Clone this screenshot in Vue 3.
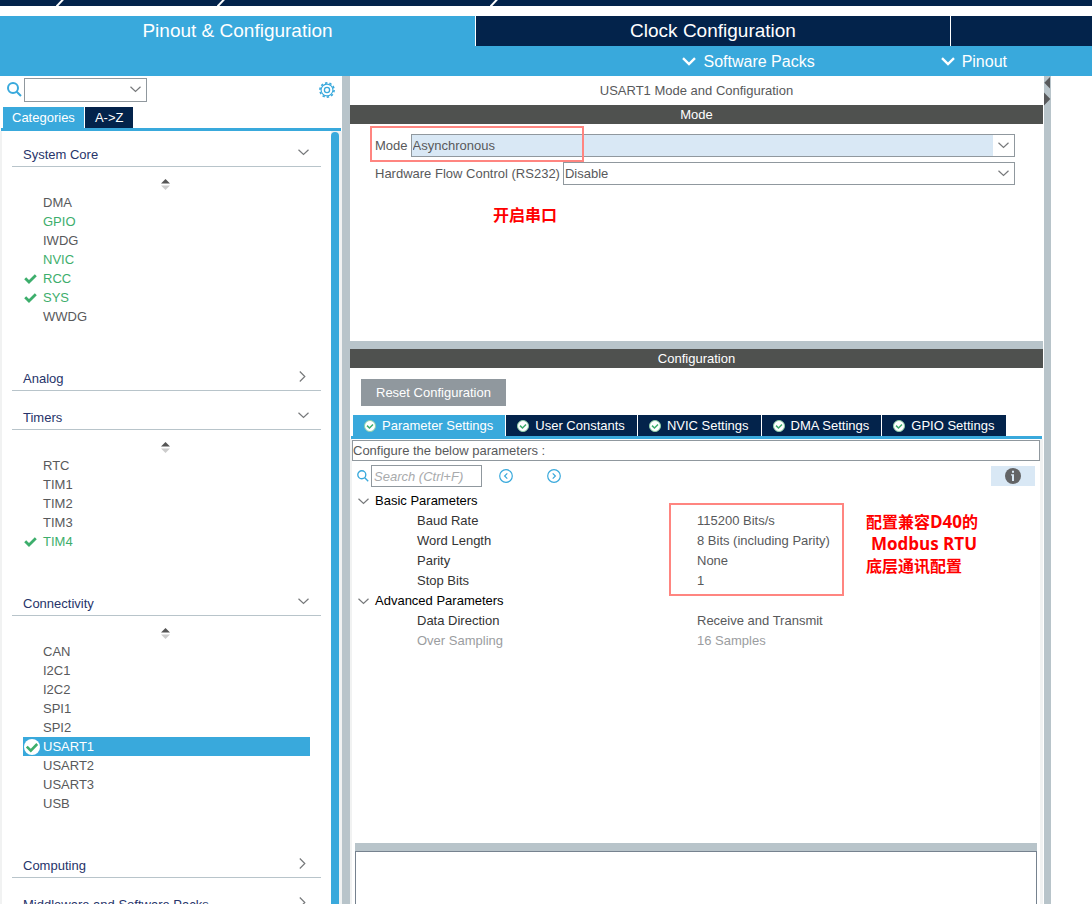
<script setup>
import { ref } from 'vue'

const sections = [
  {
    title: 'System Core',
    items: [
      { name: 'DMA' },
      { name: 'GPIO', on: true },
      { name: 'IWDG' },
      { name: 'NVIC', on: true },
      { name: 'RCC', on: true, check: true },
      { name: 'SYS', on: true, check: true },
      { name: 'WWDG' },
    ],
  },
  { title: 'Analog', items: null },
  {
    title: 'Timers',
    items: [
      { name: 'RTC' },
      { name: 'TIM1' },
      { name: 'TIM2' },
      { name: 'TIM3' },
      { name: 'TIM4', on: true, check: true },
    ],
  },
  {
    title: 'Connectivity',
    items: [
      { name: 'CAN' },
      { name: 'I2C1' },
      { name: 'I2C2' },
      { name: 'SPI1' },
      { name: 'SPI2' },
      { name: 'USART1' },
      { name: 'USART2' },
      { name: 'USART3' },
      { name: 'USB' },
    ],
  },
  { title: 'Computing', items: null },
  { title: 'Middleware and Software Packs', items: null },
]
const selected = ref('USART1')

const configTabs = ['Parameter Settings', 'User Constants', 'NVIC Settings', 'DMA Settings', 'GPIO Settings']
const activeTab = ref('Parameter Settings')

const groups = [
  {
    name: 'Basic Parameters',
    rows: [
      { name: 'Baud Rate', value: '115200 Bits/s' },
      { name: 'Word Length', value: '8 Bits (including Parity)' },
      { name: 'Parity', value: 'None' },
      { name: 'Stop Bits', value: '1' },
    ],
  },
  {
    name: 'Advanced Parameters',
    rows: [
      { name: 'Data Direction', value: 'Receive and Transmit' },
      { name: 'Over Sampling', value: '16 Samples', disabled: true },
    ],
  },
]
const mode = ref('Asynchronous')
const flow = ref('Disable')
</script>

<template>
  <div class="app">
    <div class="crumbs">
      <svg class="slash first" width="8" height="6" viewBox="0 0 8 6"><path d="M0.5 6.5L7 -0.5" /></svg>
      <svg class="slash second" width="8" height="6" viewBox="0 0 8 6"><path d="M0.5 6.5L7 -0.5" /></svg>
      <svg class="slash third" width="8" height="6" viewBox="0 0 8 6"><path d="M0.5 6.5L7 -0.5" /></svg>
    </div>

    <nav class="main-tabs">
      <button class="main-tab active">Pinout &amp; Configuration</button>
      <button class="main-tab">Clock Configuration</button>
      <button class="main-tab rest" aria-label="Project Manager"></button>
    </nav>
    <div class="sub-menu">
      <button class="menu-btn">
        <svg width="14" height="9" viewBox="0 0 14 9"><path d="M1 1.2L7 7L13 1.2" /></svg>
        Software Packs
      </button>
      <button class="menu-btn">
        <svg width="14" height="9" viewBox="0 0 14 9"><path d="M1 1.2L7 7L13 1.2" /></svg>
        Pinout
      </button>
    </div>

    <div class="workspace">
      <aside class="sidebar">
        <div class="finder">
          <svg class="lens" width="15" height="15" viewBox="0 0 15 15"><circle cx="6" cy="6" r="5" /><path d="M9.7 9.7L14 14" /></svg>
          <label class="combo finder-combo">
            <select aria-label="Search peripheral"><option></option></select>
            <svg class="chev" width="11" height="7" viewBox="0 0 11 7"><path d="M0.5 0.8L5.5 5.5L10.5 0.8" /></svg>
          </label>
          <button class="gear" aria-label="Settings">
            <svg width="16" height="16" viewBox="0 0 16 16">
              <circle cx="8" cy="8" r="7.1" stroke-width="1.6" stroke-dasharray="2.4 2.06" />
              <circle cx="8" cy="8" r="5.9" stroke-width="1.1" />
              <circle cx="8" cy="8" r="2.6" stroke-width="1.3" />
            </svg>
          </button>
        </div>
        <div class="side-tabs">
          <button class="side-tab active">Categories</button>
          <button class="side-tab">A-&gt;Z</button>
        </div>
        <div class="tree-wrap">
          <div class="tree">
            <section v-for="s in sections" :key="s.title">
              <button class="cat">
                <span>{{ s.title }}</span>
                <svg v-if="s.items" class="chev" width="11" height="7" viewBox="0 0 11 7"><path d="M0.5 0.8L5.5 5.5L10.5 0.8" /></svg>
                <svg v-else class="chev side" width="7" height="11" viewBox="0 0 7 11"><path d="M0.8 0.5L5.8 5.5L0.8 10.5" /></svg>
              </button>
              <div v-if="s.items" class="cat-body">
                <div class="sorter">
                  <svg width="9" height="11" viewBox="0 0 9 11">
                    <path d="M4.5 0L9 4.5H0Z" fill="#555" />
                    <path d="M0 6.5H9L4.5 11Z" fill="#ccc" />
                  </svg>
                </div>
                <button
                  v-for="i in s.items"
                  :key="i.name"
                  class="item"
                  :class="{ on: i.on, selected: i.name === selected }"
                  @click="selected = i.name"
                >
                  <span class="mark">
                    <svg v-if="i.name === selected" width="16" height="16" viewBox="0 0 16 16">
                      <circle cx="8" cy="8" r="8" fill="#fff" />
                      <path d="M2.8 7.6L6.8 11.6L13.2 5" fill="none" stroke="#3dae6c" stroke-width="2.6" />
                    </svg>
                    <svg v-else-if="i.check" width="13" height="10" viewBox="0 0 13 10">
                      <path d="M1.2 4.2L5 8L11.8 1.3" fill="none" stroke="#3dae6c" stroke-width="2.8" />
                    </svg>
                  </span>
                  {{ i.name }}
                </button>
              </div>
            </section>
          </div>
          <div class="scroll-thumb"></div>
        </div>
      </aside>

      <div class="splitter-v"></div>

      <main class="center">
        <h1 class="title">USART1 Mode and Configuration</h1>
        <h2 class="bar">Mode</h2>
        <div class="mode-panel">
          <div class="field">
            <label for="mode">Mode</label>
            <div class="combo tinted">
              <select id="mode" v-model="mode"><option>Asynchronous</option><option>Disable</option></select>
              <svg class="chev" width="11" height="7" viewBox="0 0 11 7"><path d="M0.5 0.8L5.5 5.5L10.5 0.8" /></svg>
            </div>
          </div>
          <div class="field">
            <label for="flow">Hardware Flow Control (RS232)</label>
            <div class="combo">
              <select id="flow" v-model="flow"><option>Disable</option></select>
              <svg class="chev" width="11" height="7" viewBox="0 0 11 7"><path d="M0.5 0.8L5.5 5.5L10.5 0.8" /></svg>
            </div>
          </div>
          <div class="note-box mode-box"></div>
          <p class="note mode-note">开启串口</p>
        </div>
        <div class="splitter-h"></div>
        <h2 class="bar">Configuration</h2>

        <div class="config">
          <button class="reset">Reset Configuration</button>
          <div class="config-tabs">
            <button
              v-for="t in configTabs"
              :key="t"
              class="config-tab"
              :class="{ active: t === activeTab }"
              @click="activeTab = t"
            >
              <svg width="12" height="12" viewBox="0 0 12 12">
                <circle cx="6" cy="6" r="5.5" fill="#fff" stroke="#8fd0a9" />
                <path d="M3 5.6L5.5 8L9 4.5" fill="none" stroke="#3dae6c" stroke-width="1.5" />
              </svg>
              {{ t }}
            </button>
          </div>
          <div class="config-page">
            <p class="hint">Configure the below parameters :</p>
            <div class="tools">
              <svg class="lens" width="12" height="12" viewBox="0 0 15 15"><circle cx="6" cy="6" r="5" /><path d="M9.7 9.7L14 14" /></svg>
              <input class="search" type="text" placeholder="Search (Ctrl+F)" aria-label="Search parameters" />
              <button class="round" aria-label="Previous">
                <svg width="14" height="14" viewBox="0 0 14 14"><circle cx="7" cy="7" r="6.3" /><path d="M8.3 4.3L5.6 7L8.3 9.7" /></svg>
              </button>
              <button class="round" aria-label="Next">
                <svg width="14" height="14" viewBox="0 0 14 14"><circle cx="7" cy="7" r="6.3" /><path d="M5.7 4.3L8.4 7L5.7 9.7" /></svg>
              </button>
              <button class="info" aria-label="Information">
                <svg width="16" height="16" viewBox="0 0 16 16">
                  <circle cx="8" cy="8" r="8" fill="#636466" />
                  <path d="M7 2.8H9V4.8H7ZM6 6.2H9V13H7V7.6H6Z" fill="#d9e8f5" />
                </svg>
              </button>
            </div>
            <div class="params">
              <table>
                <tbody v-for="g in groups" :key="g.name">
                  <tr>
                    <th colspan="2" scope="rowgroup">
                      <span class="group">
                        <svg class="chev" width="11" height="7" viewBox="0 0 11 7"><path d="M0.5 0.8L5.5 5.5L10.5 0.8" /></svg>
                        {{ g.name }}
                      </span>
                    </th>
                  </tr>
                  <tr v-for="r in g.rows" :key="r.name" :class="{ disabled: r.disabled }">
                    <td class="name">{{ r.name }}</td>
                    <td class="value">{{ r.value }}</td>
                  </tr>
                </tbody>
              </table>
              <div class="note-box param-box"></div>
              <p class="note param-note">配置兼容<span class="latin">D40</span>的<br /><span class="latin indent">Modbus RTU</span><br />底层通讯配置</p>
            </div>
            <div class="details"></div>
          </div>
        </div>
      </main>

      <div class="splitter-v right">
        <svg width="7" height="30" viewBox="0 0 7 30">
          <path d="M6 1V12.5L0.3 6.7Z" fill="#58595b" />
          <path d="M0 16.5V29.5L6.3 23Z" fill="#58595b" />
        </svg>
      </div>
      <div class="canvas"></div>
    </div>
  </div>
</template>

<style>
body {
  margin: 0;
  background: #fff;
}
</style>

<style scoped>
* {
  box-sizing: border-box;
}
.app {
  height: 100vh;
  overflow: hidden;
  display: flex;
  flex-direction: column;
  background: #fff;
  color: #58595b;
  font: 13px/16px "Liberation Sans", Arial, "Noto Sans CJK SC", sans-serif;
}
button,
select,
input {
  font: inherit;
  color: inherit;
  border: 0;
  padding: 0;
  margin: 0;
  background: none;
  border-radius: 0;
}
svg {
  display: block;
  flex: none;
}
h1,
h2,
p {
  margin: 0;
  font-size: 13px;
  font-weight: 400;
}

.crumbs {
  flex: none;
  height: 6px;
  margin-bottom: 10px;
  background: #03234b;
  display: flex;
  overflow: hidden;
}
.slash {
  stroke: #fff;
  stroke-width: 2;
}
.slash.first {
  margin-left: 56px;
}
.slash.second {
  margin-left: 153px;
}
.slash.third {
  margin-left: 265px;
}

.main-tabs {
  flex: none;
  display: flex;
  height: 30px;
}
.main-tab {
  flex: 0 0 43.5%;
  background: #03234b;
  color: #fff;
  font-size: 19px;
  border-left: 1px solid #fff;
}
.main-tab.active {
  background: #39a9dc;
  border-left: 0;
}
.main-tab.rest {
  flex: 1;
}
.sub-menu {
  flex: none;
  height: 30px;
  background: #39a9dc;
  display: flex;
  justify-content: flex-end;
  gap: 126px;
  padding: 1px 85px 0 0;
}
.menu-btn {
  display: flex;
  align-items: center;
  gap: 7px;
  color: #fff;
  font-size: 16px;
}
.menu-btn path {
  fill: none;
  stroke: #fff;
  stroke-width: 2.4;
}

.workspace {
  flex: 1;
  min-height: 0;
  display: flex;
}
.chev {
  fill: none;
  stroke: #77797b;
  stroke-width: 1.2;
}
.lens {
  fill: none;
  stroke: #39a9dc;
  stroke-width: 1.7;
}

.sidebar {
  flex: 0 0 342px;
  display: flex;
  flex-direction: column;
  min-height: 0;
}
.finder {
  flex: none;
  height: 31px;
  display: flex;
  align-items: center;
  padding: 0 7px 4px;
}
.combo {
  display: flex;
  align-items: center;
  height: 23px;
  border: 1px solid #90989e;
  background: #fff;
}
.combo select {
  flex: 1;
  min-width: 0;
  height: 100%;
  padding-left: 1px;
  appearance: none;
  outline: 0;
}
.combo .chev {
  margin: 0 5px;
}
.combo.tinted select {
  background: #d9e8f5;
}
.finder-combo {
  width: 123px;
  height: 24px;
  margin-left: 2px;
}
.finder .lens {
  stroke-width: 2;
}
.gear {
  margin-left: auto;
}
.gear svg {
  fill: none;
  stroke: #39a9dc;
}
.side-tabs {
  flex: none;
  display: flex;
  gap: 1px;
  height: 24px;
  margin: 0 1px;
  padding-left: 2px;
  border-bottom: 3px solid #39a9dc;
}
.side-tab {
  background: #03234b;
  color: #fff;
  padding: 0 10px;
}
.side-tab.active {
  background: #39a9dc;
  padding: 0 9px;
}
.tree-wrap {
  flex: 1;
  min-height: 0;
  display: flex;
  padding-right: 3px;
  background: #f1f2f2;
}
.tree {
  flex: 1;
  overflow: hidden;
  margin-left: 2px;
  padding: 0 10px;
  background: #fff;
}
.scroll-thumb {
  width: 8px;
  margin-top: 1px;
  background: #39a9dc;
  border-radius: 4px 4px 0 0;
}
.cat {
  width: 100%;
  height: 39px;
  display: flex;
  align-items: flex-end;
  justify-content: space-between;
  padding: 0 12px 3px 11px;
  border-bottom: 1px solid #b8c4ca;
  color: #27346a;
}
section:first-child .cat {
  height: 36px;
}
.cat .chev {
  margin-bottom: 7px;
}
.cat .chev.side {
  margin: 0 3px 5px;
}
.cat-body {
  padding: 0 11px 26px;
}
.sorter {
  height: 26px;
  display: flex;
  justify-content: center;
  align-items: flex-end;
  padding: 0 2px 3px 0;
}
.item {
  width: 100%;
  height: 19px;
  display: flex;
  align-items: center;
  text-align: left;
}
.mark {
  flex: 0 0 20px;
  padding-left: 1px;
}
.item.on {
  color: #3dae6c;
}
.item.selected {
  background: #39a9dc;
  color: #fff;
}

.splitter-v {
  flex: 0 0 8px;
  background: #b8c4ca;
}
.splitter-v.right {
  flex-basis: 7px;
  margin-left: 1px;
}
.canvas {
  flex: 0 0 41px;
}

.center {
  flex: 1;
  min-width: 0;
  display: flex;
  flex-direction: column;
}
.title {
  flex: none;
  height: 29px;
  line-height: 29px;
  text-align: center;
}
.bar {
  flex: none;
  height: 19px;
  line-height: 19px;
  text-align: center;
  background: #4f514f;
  color: #fff;
}
.mode-panel {
  flex: none;
  position: relative;
  height: 217px;
  padding: 10px 28px 0 25px;
}
.field {
  display: flex;
  align-items: center;
  gap: 3px;
  margin-bottom: 5px;
}
.field .combo {
  flex: 1;
}
.splitter-h {
  flex: none;
  height: 8px;
  background: #b8c4ca;
}

.config {
  flex: 1;
  min-height: 0;
  display: flex;
  flex-direction: column;
}
.reset {
  flex: none;
  align-self: flex-start;
  height: 27px;
  margin: 11px 11px 9px;
  padding: 0 15px;
  background: #90989e;
  color: #fff;
}
.config-tabs {
  flex: none;
  display: flex;
  gap: 1px;
  height: 24px;
  margin: 0 1px;
  padding-left: 2px;
  border-bottom: 3px solid #39a9dc;
}
.config-tab {
  display: flex;
  align-items: center;
  gap: 6px;
  padding: 0 12px 0 11px;
  background: #03234b;
  color: #fff;
}
.config-tab.active {
  background: #39a9dc;
}
.config-page {
  flex: 1;
  min-height: 0;
  display: flex;
  flex-direction: column;
  padding-top: 1px;
  border-left: 2px solid #f1f2f2;
  border-right: 3px solid #f1f2f2;
}
.hint {
  flex: none;
  height: 21px;
  line-height: 19px;
  border: 1px solid #90989e;
}
.tools {
  flex: none;
  display: flex;
  align-items: center;
  height: 30px;
  padding: 0 5px;
}
.search {
  width: 111px;
  height: 22px;
  margin: 0 17px 0 2px;
  padding-left: 2px;
  border: 1px solid #90989e;
  font-style: italic;
}
.search::placeholder {
  color: #a8aaac;
  opacity: 1;
}
.round svg {
  fill: none;
  stroke: #39a9dc;
  stroke-width: 1.2;
}
.round + .round {
  margin-left: 34px;
}
.info {
  width: 44px;
  height: 20px;
  margin-left: auto;
  display: flex;
  align-items: center;
  justify-content: center;
  background: #d9e8f5;
}
.params {
  flex: 1;
  min-height: 0;
  position: relative;
}
table {
  width: 100%;
  border-collapse: collapse;
}
th,
td {
  height: 20px;
  padding: 0;
  font-weight: 400;
  text-align: left;
}
.group {
  display: flex;
  align-items: center;
  gap: 6px;
  padding-left: 6px;
  color: #000;
}
.name {
  width: 345px;
  padding-left: 65px;
  color: #333;
}
.disabled td {
  color: #9b9d9f;
}
.details {
  flex: none;
  height: 53px;
  margin: 0 3px;
  border: 1px solid #76828f;
  border-bottom: 0;
  box-shadow: 0 -8px 0 #b8c4ca;
}

/* Red call-outs drawn over the panels */
.note-box {
  position: absolute;
  border: 2px solid #ff8580;
  pointer-events: none;
}
.mode-box {
  left: 20px;
  top: 2px;
  width: 214px;
  height: 36px;
}
.param-box {
  left: 317px;
  top: 12px;
  width: 175px;
  height: 93px;
}
.note {
  position: absolute;
  color: #f00;
  font: 700 16px/22px "Open Sans", "Noto Sans CJK SC", sans-serif;
  white-space: nowrap;
}
.mode-note {
  left: 143px;
  top: 80px;
}
.param-note {
  left: 514px;
  top: 20px;
}
.latin {
  font-size: 17px;
  line-height: 16px;
}
.indent {
  padding-left: 5px;
}
</style>
